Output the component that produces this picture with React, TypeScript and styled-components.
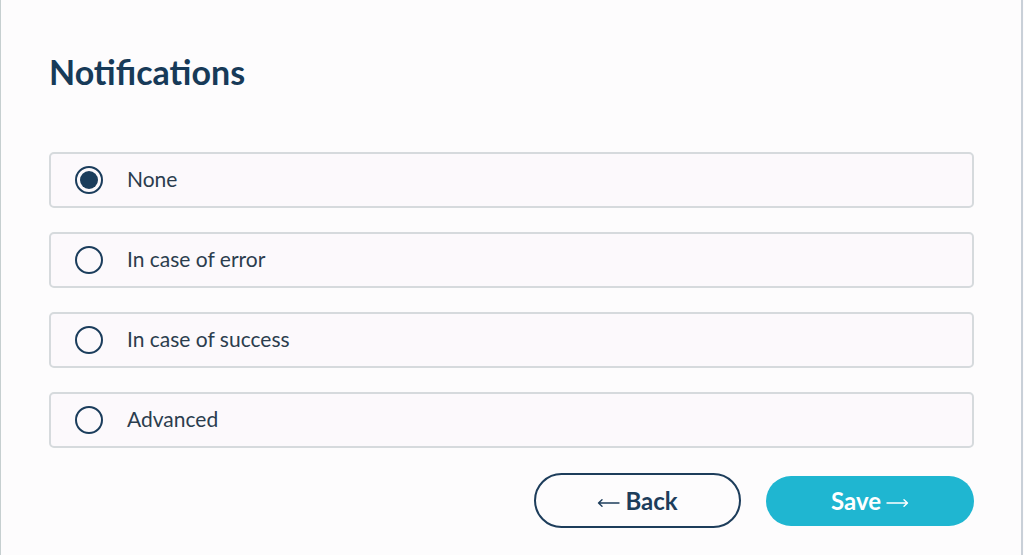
import React, {useState} from "react";
import styled, {createGlobalStyle} from "styled-components";

const GlobalStyle = createGlobalStyle`
    html, body {
        margin: 0;
        padding: 0;
        background: #fdfcfd;
    }
    * { box-sizing: border-box; }
`;

const Panel = styled.div`
    width: 1023px;
    height: 555px;
    border-left: 1px solid #c6cfd0;
    border-right: 2px solid #c9d0d8;
    background: #fdfcfd;
    padding: 52px 47px 0 48px;
    font-family: Lato, "Noto Sans", sans-serif;
`;

const Title = styled.h1`
    margin: 0;
    font-size: 34px;
    line-height: 40px;
    font-weight: 700;
    color: #173a58;
`;

const OptionList = styled.div`
    margin-top: 60px;
    display: flex;
    flex-direction: column;
    gap: 24px;
`;

const Option = styled.label`
    height: 56px;
    display: flex;
    align-items: center;
    gap: 24px;
    padding-left: 24px;
    border: 2px solid #d6dadd;
    border-radius: 5px;
    background: #fcf9fc;
    cursor: pointer;
`;

const Radio = styled.span<{ $checked: boolean }>`
    width: 28px;
    height: 28px;
    border-radius: 50%;
    border: 2px solid #1b3d5c;
    display: flex;
    align-items: center;
    justify-content: center;
    &::after {
        content: "";
        width: 18px;
        height: 18px;
        border-radius: 50%;
        background: ${p => p.$checked ? "#1b3d5c" : "transparent"};
    }
`;

const Label = styled.span`
    font-size: 21px;
    color: #2b3d4e;
    padding-bottom: 3px;
`;

const Actions = styled.div`
    margin-top: 25px;
    display: flex;
    justify-content: flex-end;
    align-items: center;
    gap: 25px;
`;

const Button = styled.button<{ $primary?: boolean }>`
    width: ${p => p.$primary ? "208px" : "207px"};
    height: ${p => p.$primary ? "50px" : "55px"};
    border-radius: 28px;
    font-family: Lato, "Noto Sans", sans-serif;
    font-size: 24px;
    font-weight: 700;
    border: ${p => p.$primary ? "none" : "2px solid #1d3d5b"};
    background: ${p => p.$primary ? "#1fb6d1" : "#fdfcfd"};
    color: ${p => p.$primary ? "#ffffff" : "#1d3d5b"};
    cursor: pointer;
    display: flex;
    align-items: center;
    justify-content: center;
    gap: 5px;
`;

const ArrowIcon = styled.svg`
    width: 23px;
    height: 10px;
    margin-top: 5px;
`;

const Arrow = ({left}: { left?: boolean }) => (
    <ArrowIcon viewBox="0 0 23 10" fill="none" stroke="currentColor" strokeWidth="1.4" strokeLinecap="round">
        {left
            ? <path d="M1.5 5H22M1.5 5L5 1.8M1.5 5L5 8.2"/>
            : <path d="M1 5H21.5M21.5 5L18 1.8M21.5 5L18 8.2"/>}
    </ArrowIcon>
);

const options = ["None", "In case of error", "In case of success", "Advanced"];

const App = () => {
    const [selected, setSelected] = useState("None");
    return (
        <>
            <GlobalStyle/>
            <Panel>
                <Title>Notifications</Title>
                <OptionList>
                    {options.map(o => (
                        <Option key={o} onClick={() => setSelected(o)}>
                            <Radio $checked={selected === o}/>
                            <Label>{o}</Label>
                        </Option>
                    ))}
                </OptionList>
                <Actions>
                    <Button><Arrow left/>Back</Button>
                    <Button $primary>Save<Arrow/></Button>
                </Actions>
            </Panel>
        </>
    )
}
export default App;
